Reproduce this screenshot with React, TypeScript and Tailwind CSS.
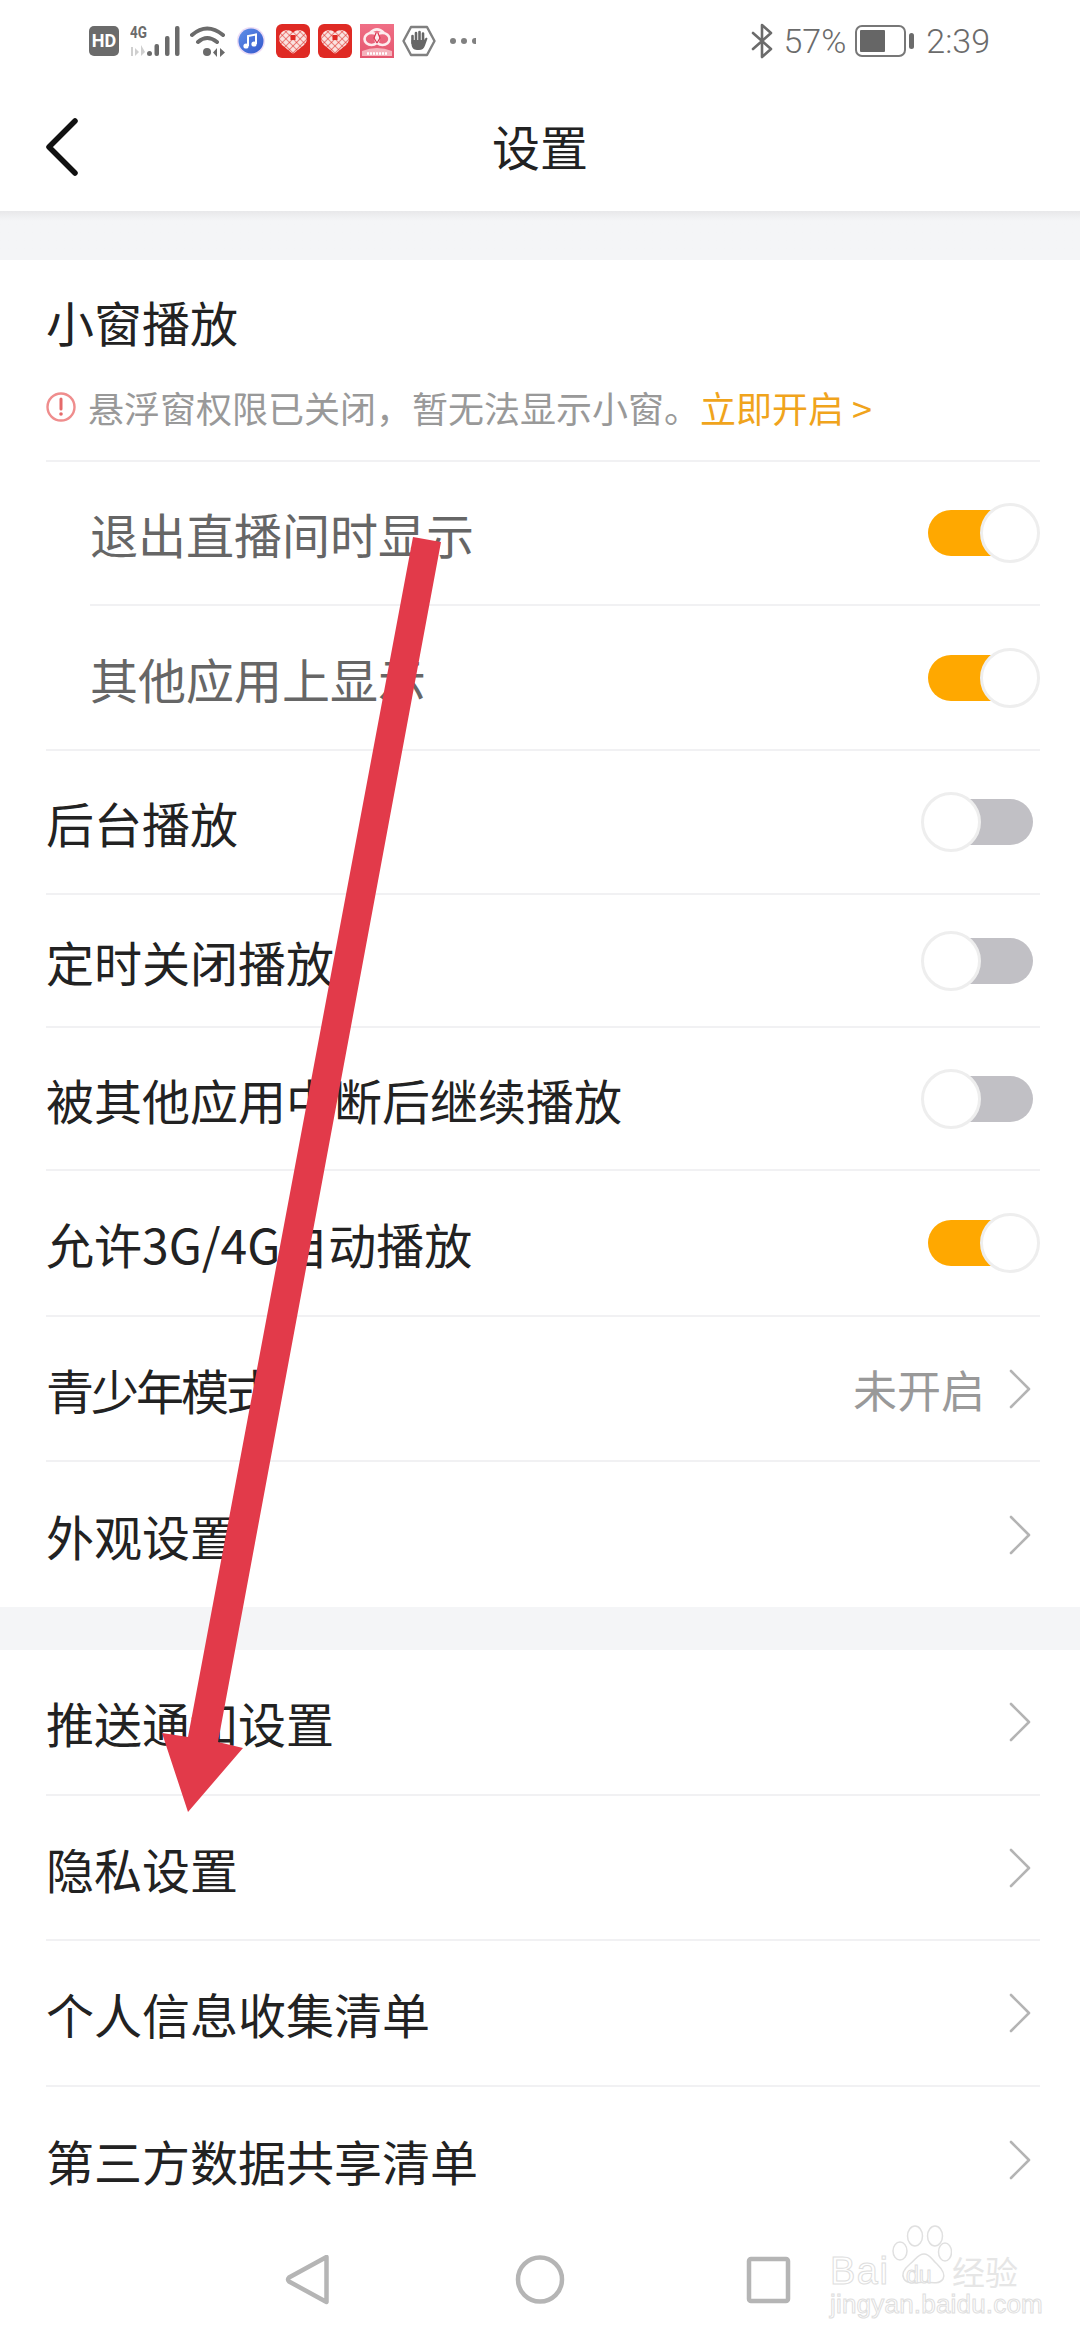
import React from 'react';

const Toggle = ({ on }: { on?: boolean }) => (
  <div className="relative w-[119px] h-[60px] shrink-0">
    <div className={`absolute left-[7px] top-[7px] w-[105px] h-[46px] rounded-full ${on ? 'bg-[#ffa800]' : 'bg-[#c1c0c5]'}`} />
    <div className={`absolute top-0 w-[60px] h-[60px] rounded-full bg-white border-[3px] border-[#eeeeee] ${on ? 'right-0' : 'left-0'}`} />
  </div>
);

const Chevron = () => (
  <svg width="22" height="40" viewBox="0 0 22 40" fill="none" className="shrink-0 mr-[9px]">
    <path d="M2 2 L20 20 L2 38" stroke="#b4b4b4" strokeWidth="2.6" strokeLinecap="round" strokeLinejoin="round" />
  </svg>
);

const Row = ({
  label,
  height,
  inset,
  right,
  last,
  muted,
  tight,
}: {
  label: string;
  height: string;
  inset?: boolean;
  right?: React.ReactNode;
  last?: boolean;
  muted?: boolean;
  tight?: boolean;
}) => (
  <div className={`${height} ${inset ? 'ml-[90px]' : 'ml-[46px]'} mr-[40px] flex items-center justify-between ${last ? '' : 'border-b-2 border-[#f1f1f3]'}`}>
    <span className={`text-[48px] leading-[60px] ${muted ? 'text-[#666666]' : 'text-[#222222]'} ${tight ? 'tracking-[-3px]' : ''}`}>{label}</span>
    {right}
  </div>
);

const HeartIcon = ({ id, className }: { id: string; className: string }) => (
  <svg width="34" height="34" viewBox="0 0 34 34" className={className}>
    <defs>
      <pattern id={id} width="5" height="5" patternUnits="userSpaceOnUse" patternTransform="rotate(45 17 17)">
        <rect width="5" height="5" fill="#fae3e0" />
        <path d="M0 0h5M0 0v5" stroke="#df2a24" strokeWidth="1.1" />
      </pattern>
    </defs>
    <rect width="34" height="34" rx="6" fill="#df2a24" />
    <path d="M17 30 L6 21 Q2 17 3.5 11.5 Q6 6 11 6 Q15 6 17 8.5 Q19 6 23 6 Q28 6 30.5 11.5 Q32 17 28 21 Z" fill={`url(#${id})`} />
    <rect x="14.5" y="11" width="5" height="5" fill="#df2a24" />
  </svg>
);

const StatusLeft = () => (
  <div className="flex items-center h-[40px] -mt-[2px]">
    <div className="ml-[89px] w-[30px] h-[30px] rounded-[5px] bg-[#6b6b6b] text-white text-[18px] font-bold leading-[30px] text-center font-['Roboto',sans-serif]">HD</div>
    <svg width="50" height="32" viewBox="0 0 50 32" className="ml-[11px]">
      <text x="0" y="13" fontSize="17" fontWeight="700" fill="#6b6b6b" fontFamily="Roboto, sans-serif" textLength="17" lengthAdjust="spacingAndGlyphs">4G</text>
      <path d="M2 22v9" stroke="#cfcfcf" strokeWidth="2" />
      <path d="M5 23l4 4-4 4z M11 20v11l4-4z" fill="#cfcfcf" />
      <rect x="17" y="26" width="5" height="5" rx="2.5" fill="#6b6b6b" />
      <rect x="24.5" y="19" width="4.5" height="12" rx="2" fill="#6b6b6b" />
      <rect x="35" y="11" width="4.5" height="20" rx="2" fill="#6b6b6b" />
      <rect x="45" y="1" width="4.5" height="30" rx="2" fill="#6b6b6b" />
    </svg>
    <svg width="36" height="32" viewBox="0 0 36 32" className="ml-[10px]">
      <path d="M2 10 Q17 -3 33 10M8 17 Q17 9 27 17" stroke="#6b6b6b" strokeWidth="4" fill="none" strokeLinecap="round" />
      <circle cx="17" cy="27" r="4" fill="#6b6b6b" />
      <path d="M27 23v9l-4-4.5zM30 23v9l5-4.5z" fill="#6b6b6b" />
    </svg>
    <svg width="28" height="28" viewBox="0 0 28 28" className="ml-[11px]">
      <defs>
        <linearGradient id="mus" x1="0" y1="0" x2="1" y2="1">
          <stop offset="0" stopColor="#5f8fe8" />
          <stop offset="1" stopColor="#3458cc" />
        </linearGradient>
      </defs>
      <circle cx="14" cy="14" r="14" fill="#ecdcf6" />
      <circle cx="14" cy="14" r="12.5" fill="url(#mus)" />
      <path d="M11 19V9l8-1.5V17" stroke="#fff" strokeWidth="2" fill="none" />
      <circle cx="9" cy="19" r="2.6" fill="#fff" />
      <circle cx="17" cy="17" r="2.6" fill="#fff" />
    </svg>
    <HeartIcon id="net-a" className="ml-[11px]" />
    <HeartIcon id="net-b" className="ml-[8px]" />
    <svg width="34" height="34" viewBox="0 0 34 34" className="ml-[8px]">
      <defs>
        <linearGradient id="cloud" x1="0" y1="0" x2="0" y2="1">
          <stop offset="0" stopColor="#f06f86" />
          <stop offset="1" stopColor="#e4566e" />
        </linearGradient>
      </defs>
      <rect width="34" height="34" fill="url(#cloud)" />
      <ellipse cx="11.5" cy="15" rx="7" ry="6" fill="none" stroke="#fdecee" strokeWidth="2.6" />
      <ellipse cx="22.5" cy="15" rx="7" ry="6" fill="none" stroke="#fdecee" strokeWidth="2.6" />
      <path d="M10 9 Q17 2 24 9" fill="none" stroke="#fdecee" strokeWidth="2.6" />
      <path d="M16 9l-2 5 3 5M18 9l2 5-3 5" fill="none" stroke="#d8344f" strokeWidth="1.2" />
      <path d="M2 27 Q17 21 32 27 V32 H2 Z" fill="#f5b3bc" />
      <path d="M7 29.500h20" stroke="#fff" strokeWidth="2.6" strokeDasharray="2 1" />
    </svg>
    <svg width="34" height="32" viewBox="0 0 34 32" className="ml-[8px]">
      <path d="M9 2h16l7.500 14L25 30H9L1.500 16z" fill="none" stroke="#808080" strokeWidth="2.4" strokeLinejoin="round" />
      <path d="M10.500 11v7M14 8v9M17.500 7v10M21 8.500v9" stroke="#666" strokeWidth="2.6" strokeLinecap="round" />
      <path d="M9.500 15h13v-1l2-1.500 1 1-2.500 7c-1 3-3 4.500-6 4.500h-2c-3.500 0-5.500-3-5.500-6z" fill="#666" />
    </svg>
    <div className="flex gap-[5px] ml-[14px]">
      <span className="w-[6px] h-[6px] rounded-full bg-[#808080]" />
      <span className="w-[6px] h-[6px] rounded-full bg-[#808080]" />
      <span className="w-[4px] h-[6px] rounded-l-full bg-[#808080]" />
    </div>
  </div>
);

const StatusRight = () => (
  <div className="flex items-center mr-[90px] -mt-[2px] text-[#6b6b6b] text-[34px] leading-[40px] font-['Roboto',sans-serif] font-light">
    <svg width="22" height="36" viewBox="0 0 22 36" fill="none">
      <path d="M2 10 L20 26 L11 34 V2 L20 10 L2 26" stroke="#6b6b6b" strokeWidth="2.6" strokeLinejoin="round" strokeLinecap="round" />
    </svg>
    <span className="ml-[10px]">57%</span>
    <div className="ml-[9px] w-[51px] h-[32px] rounded-[7px] border-[2.5px] border-[#777777] p-[3px]">
      <div className="w-[25px] h-full bg-[#666666] rounded-[1px]" />
    </div>
    <div className="ml-[3px] w-[5px] h-[16px] rounded-full bg-[#6b6b6b]" />
    <span className="ml-[12px]">2:39</span>
  </div>
);

const outlined = "text-white [-webkit-text-stroke:1px_#dedede] font-['Liberation_Sans',sans-serif]";

const Watermark = () => (
  <div className="absolute left-[830px] top-[2225px] w-[194px] h-[90px]">
    <svg width="60" height="64" viewBox="0 0 60 64" fill="none" className="absolute left-[62px] top-0" stroke="#e0e0e0" strokeWidth="1.5">
      <ellipse cx="23" cy="11" rx="7.500" ry="10" />
      <ellipse cx="43" cy="11" rx="7.500" ry="10" />
      <ellipse cx="8" cy="26" rx="7" ry="9" />
      <ellipse cx="53" cy="27" rx="6.500" ry="9" />
      <path d="M32 29c-6 0-8 5-14 10-6 5-9 10-6 15 3 5 10 4 20 3 9 1 16 2 19-3 3-5-1-10-6-15-5-4-7-10-13-10z" />
    </svg>
    <span className={`absolute left-0 top-[29px] text-[38px] leading-[34px] tracking-[1.5px] ${outlined}`}>Bai</span>
    <span className={`absolute left-[76px] top-[39px] text-[23px] leading-[22px] ${outlined}`}>du</span>
    <span className="absolute left-[122px] top-[28px] text-[33px] leading-[36px] text-[#e6e6e6]">经验</span>
    <span className={`absolute left-0 top-[67px] text-[26px] leading-[24px] tracking-[0.2px] whitespace-nowrap ${outlined}`}>jingyan.baidu.com</span>
  </div>
);

export default function App() {
  return (
    <div className="relative w-[1080px] h-[2340px] overflow-hidden bg-white font-['Noto_Sans_CJK_SC','Noto_Sans',sans-serif]">
      <div className="h-[84px] flex items-center justify-between">
        <StatusLeft />
        <StatusRight />
      </div>
      <div className="relative h-[127px] flex items-center justify-center">
        <svg width="36" height="62" viewBox="0 0 36 62" fill="none" className="absolute left-[44px] top-[32px]">
          <path d="M31 5 L5 31 L31 57" stroke="#111111" strokeWidth="5.5" strokeLinecap="round" strokeLinejoin="round" />
        </svg>
        <span className="text-[48px] leading-[60px] text-[#222222] pb-[6px]">设置</span>
      </div>
      <div className="h-[49px] bg-gradient-to-b from-[#e8e8ea] from-0% via-[#f4f5f7] via-20% to-[#f4f5f7]" />

      <div className="h-[202px] ml-[46px] mr-[40px] pt-[31px] border-b-2 border-[#f1f1f3]">
        <div className="text-[48px] leading-[60px] text-[#222222]">小窗播放</div>
        <div className="mt-[34px] flex items-center h-[44px]">
          <svg width="30" height="30" viewBox="0 0 30 30" fill="none" className="shrink-0">
            <circle cx="15" cy="15" r="13.5" stroke="#ef8d8d" strokeWidth="2.4" />
            <path d="M15 7v10" stroke="#e56a6a" strokeWidth="3" strokeLinecap="round" />
            <circle cx="15" cy="22" r="1.8" fill="#e56a6a" />
          </svg>
          <span className="ml-[12px] text-[36px] leading-[44px] text-[#999999]">悬浮窗权限已关闭，暂无法显示小窗。</span>
          <span className="text-[36px] leading-[44px] text-[#f0a41c]">立即开启 &gt;</span>
        </div>
      </div>

      <Row inset muted label="退出直播间时显示" height="h-[144px]" right={<Toggle on />} />
      <div className="h-[145px] flex">
        <div className="flex-1 border-b-2 border-[#f1f1f3] ml-[46px] mr-[40px] flex items-center justify-between pl-[44px]">
          <span className="text-[48px] leading-[60px] text-[#666666]">其他应用上显示</span>
          <Toggle on />
        </div>
      </div>
      <Row label="后台播放" height="h-[144px]" right={<Toggle />} />
      <Row label="定时关闭播放" height="h-[133px]" right={<Toggle />} />
      <Row label="被其他应用中断后继续播放" height="h-[143px]" right={<Toggle />} />
      <Row label="允许3G/4G自动播放" height="h-[146px]" right={<Toggle on />} />
      <Row
        tight
        label="青少年模式"
        height="h-[145px]"
        right={
          <div className="flex items-center gap-[24px]">
            <span className="text-[44px] leading-[60px] text-[#999999]">未开启</span>
            <Chevron />
          </div>
        }
      />
      <Row label="外观设置" height="h-[145px]" right={<Chevron />} last />

      <div className="h-[43px] bg-[#f4f5f7]" />

      <Row label="推送通知设置" height="h-[146px]" right={<Chevron />} />
      <Row label="隐私设置" height="h-[145px]" right={<Chevron />} />
      <Row label="个人信息收集清单" height="h-[146px]" right={<Chevron />} />
      <Row label="第三方数据共享清单" height="h-[145px]" right={<Chevron />} last />

      <svg width="1080" height="50" viewBox="0 0 1080 50" fill="none" className="block mt-[23px]">
        <path d="M326.500 2 L289 22.500 Q287 24.500 289 26.500 L326.500 47 Z" stroke="#b5b5b5" strokeWidth="4.5" strokeLinejoin="round" />
        <circle cx="540" cy="24.500" r="22" stroke="#b5b5b5" strokeWidth="4.5" />
        <rect x="749" y="4" width="39" height="42" rx="2" stroke="#b5b5b5" strokeWidth="4.5" />
      </svg>

      <Watermark />

      {/* red arrow pasted over the screenshot */}
      <svg width="1080" height="2340" viewBox="0 0 1080 2340" className="absolute left-0 top-0 pointer-events-none">
        <polygon points="413,537 441,542 218,1742 243,1748 188,1812 162,1733 188,1737" fill="#e23a4a" />
      </svg>
    </div>
  );
}
